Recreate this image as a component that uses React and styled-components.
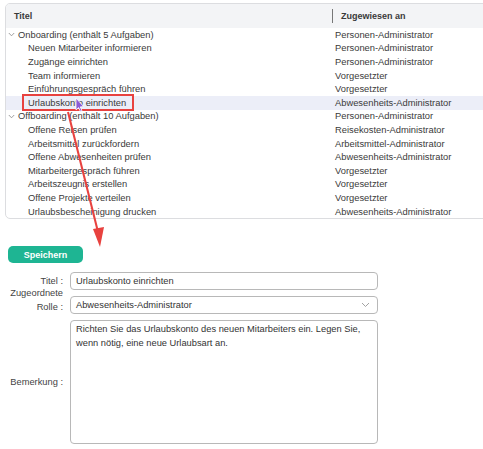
import React from "react";
import styled, { createGlobalStyle } from "styled-components";

const GlobalStyle = createGlobalStyle`
	html, body {
		margin: 0;
		padding: 0;
		background: #ffffff;
		overflow: hidden;
	}
	body {
		font-family: "Liberation Sans", Arial, sans-serif;
		color: #333;
		width: 483px;
		height: 449px;
	}
`;

const groups = [
	{
		title: "Onboarding (enthält 5 Aufgaben)",
		role: "Personen-Administrator",
		items: [
			["Neuen Mitarbeiter informieren", "Personen-Administrator"],
			["Zugänge einrichten", "Personen-Administrator"],
			["Team informieren", "Vorgesetzter"],
			["Einführungsgespräch führen", "Vorgesetzter"],
			["Urlaubskonto einrichten", "Abwesenheits-Administrator", true],
		],
	},
	{
		title: "Offboarding (enthält 10 Aufgaben)",
		role: "Personen-Administrator",
		items: [
			["Offene Reisen prüfen", "Reisekosten-Administrator"],
			["Arbeitsmittel zurückfordern", "Arbeitsmittel-Administrator"],
			["Offene Abwesenheiten prüfen", "Abwesenheits-Administrator"],
			["Mitarbeitergespräch führen", "Vorgesetzter"],
			["Arbeitszeugnis erstellen", "Vorgesetzter"],
			["Offene Projekte verteilen", "Vorgesetzter"],
			["Urlaubsbescheinigung drucken", "Abwesenheits-Administrator"],
		],
	},
];

function Chevron() {
	return (
		<svg width="7" height="5" viewBox="0 0 7 5">
			<path d="M0.8 1 L3.5 3.8 L6.2 1" fill="none" stroke="#888" strokeWidth="0.8" />
		</svg>
	);
}

function App() {
	return (
		<Page>
			<GlobalStyle />
			<TablePanel>
				<HeaderRow>
					<HeadCell>Titel</HeadCell>
					<HeadCell divider>Zugewiesen an</HeadCell>
				</HeaderRow>
				{groups.map((g) => (
					<React.Fragment key={g.title}>
						<Row>
							<TitleCell>
								<Toggle>
									<Chevron />
								</Toggle>
								{g.title}
							</TitleCell>
							<RoleCell>{g.role}</RoleCell>
						</Row>
						{g.items.map(([t, r, sel]) => (
							<Row key={t} selected={sel}>
								<TitleCell child>
									{sel ? <Marked>{t}</Marked> : t}
								</TitleCell>
								<RoleCell>{r}</RoleCell>
							</Row>
						))}
					</React.Fragment>
				))}
			</TablePanel>

			<FormArea>
				<SaveButton>Speichern</SaveButton>
				<FormGrid>
					<Label>Titel :</Label>
					<Field>Urlaubskonto einrichten</Field>

					<Label stacked>
						<span>Zugeordnete</span>
						<span>Rolle :</span>
					</Label>
					<Field>
						Abwesenheits-Administrator
						<svg width="9" height="6" viewBox="0 0 9 6">
							<path d="M1 1 L4.5 4.5 L8 1" fill="none" stroke="#999" strokeWidth="0.9" />
						</svg>
					</Field>

					<Label>Bemerkung :</Label>
					<TextBox>
						Richten Sie das Urlaubskonto des neuen Mitarbeiters ein. Legen Sie,
						<br />
						wenn nötig, eine neue Urlaubsart an.
					</TextBox>
				</FormGrid>
			</FormArea>

			<Overlay width="483" height="449" viewBox="0 0 483 449">
				<line x1="68" y1="112" x2="98" y2="232" stroke="#e8423f" strokeWidth="2" />
				<polygon points="93,229 104,227 100,247" fill="#e8423f" />
				<path
					d="M76 98 L76 110 L78.6 107.6 L80.4 111.4 L82 110.6 L80.2 106.9 L83.6 106.6 Z"
					fill="#8c5bd6"
					stroke="#ffffff"
					strokeWidth="0.8"
				/>
			</Overlay>
		</Page>
	);
}

const Page = styled.div`
	position: relative;
	width: 483px;
	height: 449px;
	padding-top: 3px;
	box-sizing: border-box;
	overflow: hidden;
`;

const TablePanel = styled.div`
	margin-left: 5px;
	width: 500px;
	border: 1px solid #dcdde0;
	border-radius: 5px;
	overflow: hidden;
	font-size: 9.35px;
`;

const HeaderRow = styled.div`
	display: grid;
	grid-template-columns: 326px 1fr;
	height: 24px;
	align-items: center;
	background: #f3f4f6;
`;

const HeadCell = styled.div`
	font-size: 9px;
	font-weight: 700;
	color: #3a3a3a;
	padding-left: 8px;
	border-left: ${(p) => (p.divider ? "1px solid #777" : "none")};
	line-height: 14px;
`;

const Row = styled.div`
	display: grid;
	grid-template-columns: 326px 1fr;
	height: 13.6px;
	align-items: center;
	background: ${(p) => (p.selected ? "#eceef8" : "transparent")};
	color: #3a3a3a;
	white-space: nowrap;
`;

const TitleCell = styled.div`
	display: flex;
	align-items: center;
	padding-left: ${(p) => (p.child ? "22px" : "1px")};
`;

const Toggle = styled.span`
	display: inline-flex;
	width: 9px;
	justify-content: center;
	margin-right: 2px;
`;

const Marked = styled.span`
	position: relative;
	&::after {
		content: "";
		position: absolute;
		left: -6px;
		top: -3.5px;
		width: 112px;
		height: 17px;
		box-sizing: border-box;
		border: 2px solid #e8423f;
	}
`;

const RoleCell = styled.div`
	padding-left: 3px;
`;

const FormArea = styled.div`
	padding: 27px 0 0 8px;
`;

const SaveButton = styled.button`
	display: block;
	width: 75px;
	height: 17px;
	border: none;
	border-radius: 5px;
	background: #1eb593;
	color: #ffffff;
	font-family: inherit;
	font-size: 9px;
	font-weight: 700;
	padding: 0;
`;

const FormGrid = styled.div`
	display: grid;
	grid-template-columns: 55px 308px;
	grid-template-rows: 18px 18px 124px;
	column-gap: 7px;
	row-gap: 6px;
	margin-top: 9px;
	font-size: 9.3px;
`;

const Label = styled.div`
	display: flex;
	flex-direction: column;
	justify-content: ${(p) => (p.stacked ? "flex-end" : "center")};
	align-items: flex-end;
	height: 100%;
	margin-bottom: ${(p) => (p.stacked ? "-2px" : "0")};
	color: #444;
	line-height: 14px;
	white-space: nowrap;
`;

const Field = styled.div`
	box-sizing: border-box;
	border: 1px solid #b8b8b8;
	border-radius: 4px;
	display: flex;
	align-items: center;
	justify-content: space-between;
	padding: 0 7px 0 5px;
	color: #333;
	background: #fff;
`;

const TextBox = styled.div`
	box-sizing: border-box;
	border: 1px solid #b8b8b8;
	border-radius: 4px;
	padding: 1px 6px 0 5px;
	line-height: 14px;
	color: #333;
	white-space: nowrap;
`;

const Overlay = styled.svg`
	position: absolute;
	left: 0;
	top: 0;
	pointer-events: none;
`;

export default App;
